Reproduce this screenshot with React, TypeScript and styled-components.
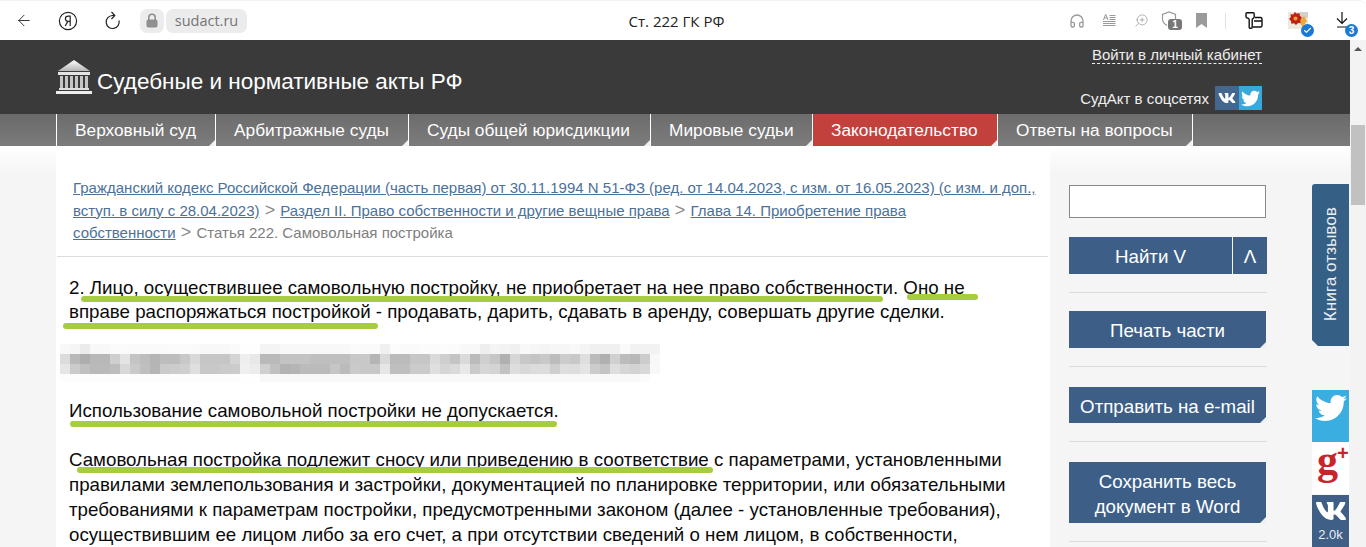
import React from "react";
import styled, { createGlobalStyle } from "styled-components";
import { ArrowLeft, Headphones, ZoomIn, Check } from "lucide-react";
import { FaVk, FaTwitter } from "react-icons/fa";

const Global = createGlobalStyle`
  html, body { margin: 0; padding: 0; height: 100%; overflow: hidden; background: #fff; }
  * { box-sizing: border-box; }
`;

const Shell = styled.div`
  width: 1366px; height: 547px; overflow: hidden; display: flex; flex-direction: column;
  font-family: "Liberation Sans", Arial, sans-serif; background: #fff; position: relative;
`;

const Toolbar = styled.div`
  height: 40px; flex: none; display: grid; grid-template-columns: 1fr auto 1fr; align-items: center;
  background: #fff; border-top: 1px solid #f2f2f2; border-top-right-radius: 8px; padding: 0 14px 0 15px;
`;
const ToolLeft = styled.div`display: flex; align-items: center;`;
const ToolRight = styled.div`display: flex; align-items: center; justify-content: flex-end;`;
const ToolButton = styled.span<{ $w: number; $color?: string }>`
  width: ${(p) => p.$w}px; display: inline-flex; align-items: center; justify-content: center; height: 24px;
  color: ${(p) => p.$color ?? "#222"}; position: relative; flex: none;
`;
const LockPill = styled.span`
  width: 24px; height: 24px; border-radius: 7px; background: #ececec; display: inline-flex; align-items: center; justify-content: center;
  margin-left: 18px; color: #8f8f8f;
`;
const HostPill = styled.span`
  height: 24px; width: 81px; margin-left: 2px; border-radius: 7px; background: #ececec; color: #757575;
  font: 14.5px "Open Sans", sans-serif; display: inline-flex; align-items: center; justify-content: center;
`;
const PageTitle = styled.div`
  font: 15px "Open Sans", sans-serif; color: #222; transform: translateX(-7px);
`;
const Divider = styled.span`width: 1px; height: 16px; background: #e2e2e2; margin: 0 18px 0 16px;`;
const CountBadge = styled.span`
  position: absolute; left: 19px; top: 10px; width: 14px; height: 11px; border-radius: 3px; background: #777; color: #fff;
  font: bold 10px/11px "Liberation Sans", sans-serif; text-align: center;
`;
const CheckBadge = styled.span`
  position: absolute; right: 18px; bottom: -4px; width: 13px; height: 13px; border-radius: 50%; background: #1a78d6; color: #fff;
  display: flex; align-items: center; justify-content: center;
`;
const CountCircle = styled.span`
  position: absolute; right: -6px; bottom: -4px; width: 13px; height: 13px; border-radius: 50%; background: #1a78d6; color: #fff;
  font: bold 10px/13px "Liberation Sans", sans-serif; text-align: center;
`;

const Viewport = styled.div`flex: 1; min-height: 0; display: flex;`;
const Page = styled.div`flex: 1; min-width: 0; display: flex; flex-direction: column;`;

const Scrollbar = styled.div`
  width: 16px; flex: none; background: #f3f3f3; display: flex; flex-direction: column; align-items: center; padding-top: 7px;
`;
const ScrollUp = styled.span`
  width: 0; height: 0; border-left: 4px solid transparent; border-right: 4px solid transparent; border-bottom: 4px solid #555;
`;
const ScrollThumb = styled.div`width: 14px; height: 80px; background: #c1c1c1; margin-top: 74px;`;

const Header = styled.header`
  height: 74px; flex: none; background: #3a3a3a; display: flex; justify-content: space-between; padding: 0 88px 0 56px; color: #fff;
`;
const Brand = styled.div`display: flex; align-items: center; gap: 5px;`;
const BrandName = styled.div`font-size: 22.5px; color: #fff; white-space: nowrap; padding-top: 9px;`;
const HeaderRight = styled.div`display: flex; flex-direction: column; align-items: flex-end; padding-top: 6px;`;
const Login = styled.a`
  font-size: 15px; line-height: 17px; color: #eee; border-bottom: 1px dashed #eee;
`;
const SocialRow = styled.div`display: flex; align-items: center; margin-top: 22px; font-size: 15px; color: #eee;`;
const SocialLabel = styled.span`margin-right: 6px;`;
const SocialIcon = styled.span<{ $bg: string }>`
  width: 23.5px; height: 24px; background: ${(p) => p.$bg}; color: #fff; display: flex; align-items: center; justify-content: center;
`;

const Nav = styled.nav`
  height: 32px; flex: none; display: flex; padding-left: 56px; background: linear-gradient(#6a6a6a, #7b7b7b);
`;
const NavTab = styled.a<{ $w: number; $active?: boolean }>`
  width: ${(p) => p.$w}px; flex: none; position: relative; border-left: 1px solid #fff; display: flex; align-items: center; padding: 1px 0 0 18px;
  font-size: 17.3px; color: #fff; white-space: nowrap; background: ${(p) => (p.$active ? "#c2413d" : "linear-gradient(#6c6c6c,#7c7c7c)")};
  &::after {
    content: ""; position: absolute; right: 0; bottom: 0; width: 0; height: 0;
    border-left: 6px solid transparent; border-bottom: 6px solid #f0f0f0;
  }
`;
const NavEnd = styled.span`width: 1px; background: #fff;`;

const Body = styled.div`
  flex: 1; min-height: 0; display: flex; padding-left: 56px; background: linear-gradient(#fff 0, #f5f5f5 28px); position: relative;
`;
const Article = styled.main`width: 994px; flex: none; background: #fff; padding: 31px 2px 0 1px;`;
const Crumbs = styled.div`
  padding: 0 0 0 16px; font-size: 15px; line-height: 22.7px; color: #808080; border-bottom: 1px solid #ddd; height: 80px; white-space: nowrap;
`;
const Crumb = styled.a`color: #4b7199; text-decoration: underline;`;
const Sep = styled.span`color: #8a8a8a; font-size: 18px; line-height: 20px; margin: 0 1px;`;
const Para = styled.p<{ $top: number; $lh?: number }>`
  position: relative; margin: ${(p) => p.$top}px 0 0; padding: 0 0 0 12px; width: 958px; font-size: 18.72px; line-height: ${(p) => p.$lh ?? 24.8}px; color: #0a0a0a;
`;
const Stroke = styled.span<{ $l: number; $t: number; $w: number }>`
  position: absolute; left: ${(p) => p.$l}px; top: ${(p) => p.$t}px; width: ${(p) => p.$w}px; height: 6px; border-radius: 3px; background: #a6cd3d;
`;
const Censored = styled.svg`display: block; margin: 19.6px 0 0 3px;`;

const Aside = styled.aside`
  width: 198px; margin-left: 19px; flex: none; padding-top: 39px; display: flex; flex-direction: column;
  & > * { flex: none; }
`;
const SearchInput = styled.input`
  width: 197px; height: 33px; border: 1px solid #888; background: #fff; padding: 0; display: block;
`;
const SearchRow = styled.div`display: flex; gap: 1px; margin-top: 19px; width: 198px;`;
const BlueBtn = styled.button<{ $w?: number }>`
  ${(p) => (p.$w ? `width:${p.$w}px;` : "flex:1;")}
  height: 37px; border: 0; background: #3d5f87; color: #fff; font: 18.72px "Liberation Sans", sans-serif; padding: 3px 0 0;
`;
const Rule = styled.div<{ $after?: number }>`height: 1px; background: #dcdcdc; width: 198px; margin: 18px 0 ${(p) => p.$after ?? 18}px;`;
const ActionBtn = styled.button<{ $h: number }>`
  position: relative; width: 197px; height: ${(p) => p.$h}px; border: 0; background: #3d5f87; color: #fff; padding: 2px 0 0;
  font: 18.72px/25px "Liberation Sans", sans-serif; white-space: pre-line; display: block;
  &::after {
    content: ""; position: absolute; right: 0; bottom: 0; width: 0; height: 0;
    border-left: 6px solid transparent; border-bottom: 6px solid #f0f0f0;
  }
`;

const Feedback = styled.a`
  position: absolute; right: 1px; top: 38px; width: 37px; height: 162px; background: #355f85; color: #e8eef4;
  border-radius: 3px 0 0 0; display: flex; align-items: center; justify-content: center; font-size: 17.2px;
  clip-path: polygon(0 0, 100% 0, 100% 100%, 6px 100%, 0 calc(100% - 6px));
`;
const FeedbackText = styled.span`writing-mode: vertical-rl; transform: rotate(180deg); white-space: nowrap; margin-top: -2px;`;
const Share = styled.a<{ $bg: string; $top: number }>`
  position: absolute; right: 1px; top: ${(p) => p.$top}px; width: 37px; height: 52px; background: ${(p) => p.$bg}; color: #fff;
  display: flex; flex-direction: column; align-items: center;
`;
const GPlus = styled.span`font: bold 42px/36px "Liberation Serif", serif; color: #c8242b; display: flex; width: 100%; padding-left: 5px;`;
const GPlusSign = styled.span`font: bold 20px/22px "Liberation Sans", sans-serif; margin-left: -1px;`;
const ShareCount = styled.span`font-size: 13px; line-height: 14px; color: #e8eef4; margin-top: 1px;`;

/* Pixelated, censored line: one row of grey values per pixel row of the mosaic. */
const mosaic = [
  "f8f5ebf8f8fbfbfafafafafbfbfaf8f8f8fafefef4f4f8f8f8f8f8f8f8fbfafaf0fcfafafbfbfcfbf8f8eef4f2f0f8f6f4f6f6f8f4f0f0f0faf2f2f2ff",
  "dcb9aeb8b8cfe3c4bdb5bdbdc8d9c6c6c6d4eee8b9b9c3c3c3bfbfbfbfc8c8b5dabbbbc6c6dacec4dabbcfc6b0d6c8c4c9bcccc8debbb0d0bcb8ccf8f8",
  "e6cbc0b9b9bdd8cabfb5cacccfdfc8c8cbccefecd0c0b2b5bbbbbbc6bbcac8c8e6bfbfcbcbdfd5dae8cad6d4c2ddd8dcdccededde4ccc4ded6d2d8f8f8",
  "fcfcfcfcfcfcfcfcfcfcfcfcfcfcfcfcfcfcfefef8f8f8f8f8f8f8f8f8f8f8f8f8f8f8f8f8f8f8f8f8f8f8f8f8f8f8f8f8f8f8f8f8f8f8f8f8f8fbfffe",
];

function CensorCells() {
  const heights = [10, 10, 10, 8];
  let y = 0;
  return (
    <>
      {mosaic.map((row, r) => {
        const top = y;
        y += heights[r];
        return Array.from({ length: row.length / 2 }, (_, c) => {
          const hex = row.slice(c * 2, c * 2 + 2);
          return <rect key={`${r}-${c}`} x={c * 10} y={top} width={10} height={heights[r]} fill={`#${hex}${hex}${hex}`} />;
        });
      })}
    </>
  );
}

const Bank = () => (
  <svg width="36" height="36" viewBox="0 0 36 36">
    <defs><linearGradient id="b" x1="0" y1="0" x2="0" y2="1"><stop offset="0" stopColor="#fff" /><stop offset="1" stopColor="#b5b5b5" /></linearGradient></defs>
    <path d="M18 1 L34 12 H2 Z" fill="url(#b)" />
    <rect x="2" y="13" width="32" height="3" fill="#e4e4e4" />
    {[5, 10, 15, 20, 25, 30].map((x) => <rect key={x} x={x - 1} y="17" width="3" height="12" fill="#c4c4c4" />)}
    <rect x="3" y="29" width="30" height="2" fill="#ddd" />
    <rect x="0" y="32" width="36" height="3" fill="#eee" />
  </svg>
);

const YaIcon = () => (
  <svg width="20" height="20" viewBox="0 0 20 20" fill="none" stroke="#222" strokeWidth="1.2">
    <circle cx="10" cy="10" r="8.6" />
    <path d="M12.2 15V5.2H10.2C8.3 5.2 7.4 6.400 7.400 7.800c0 1.500.9 2.500 2.600 2.600h2.200M9.800 10.400 7.200 15" />
  </svg>
);
const ReloadIcon = () => (
  <svg width="18" height="20" viewBox="0 0 18 20" fill="none" stroke="#222" strokeWidth="1.2">
    <path d="M15 9.500A6.500 6.500 0 1 1 8.500 4.500H10" />
    <path d="M7.500 1 10.800 4.500 7.500 8" />
  </svg>
);
const LockIcon = () => (
  <svg width="14" height="16" viewBox="0 0 14 16">
    <path d="M3.800 7V4.500a3.200 3.200 0 0 1 6.400 0V7" fill="none" stroke="#8f8f8f" strokeWidth="1.600" />
    <rect x="1.500" y="6.500" width="11" height="8" rx="1.800" fill="#8f8f8f" />
  </svg>
);
const ReaderIcon = () => (
  <svg width="13" height="13" viewBox="0 0 13 13" fill="none" stroke="#999" strokeWidth="1">
    <path d="M6.500 1.500h6M6.500 3.500h6M6.500 5.500h6M0 7.500h12.500M0 9.500h12.500M0 11.500h12.500" />
    <path d="M.5 6 2.500.5h.4L5 6M1.200 4h3" />
  </svg>
);
const ShieldIcon = () => (
  <svg width="16" height="18" viewBox="0 0 16 18" fill="none" stroke="#999" strokeWidth="1.200" style={{ transform: "translate(-2px,-1px)" }}>
    <path d="M14.500 8V3.500L8 1 1.500 3.500V8c0 3 2 5 4.500 6.500" />
  </svg>
);
const BookmarkIcon = () => (
  <svg width="11" height="15" viewBox="0 0 11 15"><path d="M0 0h11v15L5.500 11 0 15Z" fill="#9a9a9a" /></svg>
);
const CollectIcon = () => (
  <svg width="18" height="18" viewBox="0 0 18 18" fill="none" stroke="#111" strokeWidth="1.400">
    <path d="M1.800.8h6.400c.6 0 1 .4 1 1V5c0 .6-.4 1-1 1.300-.6.300-1 .7-1 1.400v7.800c0 1.200-3 1.200-3 0V7.700c0-.7-.4-1.100-1-1.400C1.600 6 1 5.600 1 5V1.800c0-.6.300-1 .8-1Z" />
    <path d="M10 5.500h5.500c.8 0 1.500.7 1.500 1.500v6.500c0 .8-.7 1.500-1.500 1.500H8M9 9h8" />
  </svg>
);
const ExtensionIcon = () => (
  <svg width="20" height="17" viewBox="0 0 20 17">
    <rect x="0" y="0" width="20" height="17" fill="#eee9df" />
    <path d="M12 0h8v6h-8Z" fill="#d3d1c8" />
    <path d="M11 9.500 16 4l3 5-4.500 6Z" fill="#e8ab3c" />
    <path d="M7 0l1.800 1.700L11.500 1l.4 2.700L14 5.800l-1.700 2.100.4 2.800-2.700.4L8 13l-1.900-1.700-2.800.4-.3-2.800L1 7l1.800-2L2.500 2.300l2.700.2Z" fill="#bf1f17" />
    <circle cx="7.500" cy="6.500" r="2" fill="#e6a030" />
  </svg>
);
const DownloadIcon = () => (
  <svg width="12" height="16" viewBox="0 0 12 16" fill="none" stroke="#111" strokeWidth="1.200" style={{ transform: "translateY(-1px)" }}>
    <path d="M6 0v11.500M1 6.500 6 11.500 11 6.500M1 15h10" />
  </svg>
);

export default function App() {
  return (
    <Shell>
      <Global />
      <Toolbar>
        <ToolLeft>
          <ToolButton $w={18}><ArrowLeft size={19} strokeWidth={1.2} /></ToolButton>
          <ToolButton $w={70}><YaIcon /></ToolButton>
          <ToolButton $w={19}><ReloadIcon /></ToolButton>
          <LockPill><LockIcon /></LockPill>
          <HostPill>sudact.ru</HostPill>
        </ToolLeft>
        <PageTitle>Ст. 222 ГК РФ</PageTitle>
        <ToolRight>
          <ToolButton $w={16} $color="#999"><Headphones size={16} strokeWidth={2} /></ToolButton>
          <ToolButton $w={48} $color="#999"><ReaderIcon /></ToolButton>
          <ToolButton $w={16} $color="#999"><ZoomIn size={15} strokeWidth={1.2} style={{ transform: "scaleX(-1)" }} /></ToolButton>
          <ToolButton $w={44} $color="#999"><ShieldIcon /><CountBadge>1</CountBadge></ToolButton>
          <ToolButton $w={16}><BookmarkIcon /></ToolButton>
          <Divider />
          <ToolButton $w={20}><CollectIcon /></ToolButton>
          <ToolButton $w={68}><ExtensionIcon /><CheckBadge><Check size={9} strokeWidth={3} /></CheckBadge></ToolButton>
          <ToolButton $w={20}><DownloadIcon /><CountCircle>3</CountCircle></ToolButton>
        </ToolRight>
      </Toolbar>
      <Viewport>
        <Page>
          <Header>
            <Brand><Bank /><BrandName>Судебные и нормативные акты РФ</BrandName></Brand>
            <HeaderRight>
              <Login>Войти в личный кабинет</Login>
              <SocialRow>
                <SocialLabel>СудАкт в соцсетях</SocialLabel>
                <SocialIcon $bg="#44678f"><FaVk size={18} /></SocialIcon>
                <SocialIcon $bg="#39a9dc"><FaTwitter size={19} /></SocialIcon>
              </SocialRow>
            </HeaderRight>
          </Header>
          <Nav>
            <NavTab $w={159}>Верховный суд</NavTab>
            <NavTab $w={193}>Арбитражные суды</NavTab>
            <NavTab $w={242}>Суды общей юрисдикции</NavTab>
            <NavTab $w={162}>Мировые судьи</NavTab>
            <NavTab $w={185} $active>Законодательство</NavTab>
            <NavTab $w={195}>Ответы на вопросы</NavTab>
            <NavEnd />
          </Nav>
          <Body>
            <Article>
              <Crumbs>
                <Crumb>Гражданский кодекс Российской Федерации (часть первая) от 30.11.1994 N 51-ФЗ (ред. от 14.04.2023, с изм. от 16.05.2023) (с изм. и доп.,</Crumb>
                <br />
                <Crumb>вступ. в силу с 28.04.2023)</Crumb> <Sep>&gt;</Sep> <Crumb>Раздел II. Право собственности и другие вещные права</Crumb> <Sep>&gt;</Sep>{" "}
                <Crumb>Глава 14. Приобретение права</Crumb>
                <br />
                <Crumb>собственности</Crumb> <Sep>&gt;</Sep> Статья 222. Самовольная постройка
              </Crumbs>
              <Para $top={19} $lh={24}>
                2. Лицо, осуществившее самовольную постройку, не приобретает на нее право собственности. Оно не вправе распоряжаться постройкой - продавать, дарить, сдавать в аренду, совершать другие сделки.
                <Stroke $l={24} $t={20} $w={802} />
                <Stroke $l={850} $t={18} $w={71} />
                <Stroke $l={6} $t={47} $w={315} />
              </Para>
              <Censored width="600" height="38" viewBox="0 0 600 38" shapeRendering="crispEdges">
                <CensorCells />
              </Censored>
              <Para $top={17}>
                Использование самовольной постройки не допускается.
                <Stroke $l={13} $t={22} $w={487} />
              </Para>
              <Para $top={25}>
                Самовольная постройка подлежит сносу или приведению в соответствие с параметрами, установленными правилами землепользования и застройки, документацией по планировке территории, или обязательными требованиями к параметрам постройки, предусмотренными законом (далее - установленные требования), осуществившим ее лицом либо за его счет, а при отсутствии сведений о нем лицом, в собственности,
                <Stroke $l={20} $t={19} $w={636} />
              </Para>
            </Article>
            <Aside>
              <SearchInput aria-label="Поиск" />
              <SearchRow>
                <BlueBtn>Найти V</BlueBtn>
                <BlueBtn $w={34}>Λ</BlueBtn>
              </SearchRow>
              <Rule />
              <ActionBtn $h={37}>Печать части</ActionBtn>
              <Rule $after={20} />
              <ActionBtn $h={36}>Отправить на e-mail</ActionBtn>
              <Rule $after={20} />
              <ActionBtn $h={61}>{"Сохранить весь\nдокумент в Word"}</ActionBtn>
              <Rule />
            </Aside>
            <Feedback><FeedbackText>Книга отзывов</FeedbackText></Feedback>
            <Share $bg="#3aaee0" $top={244}><FaTwitter size={32} style={{ marginTop: 2 }} /></Share>
            <Share $bg="#fff" $top={296}><GPlus>g<GPlusSign>+</GPlusSign></GPlus></Share>
            <Share $bg="#3f5f87" $top={349}><FaVk size={32} /><ShareCount>2.0k</ShareCount></Share>
          </Body>
        </Page>
        <Scrollbar><ScrollUp /><ScrollThumb /></Scrollbar>
      </Viewport>
    </Shell>
  );
}
